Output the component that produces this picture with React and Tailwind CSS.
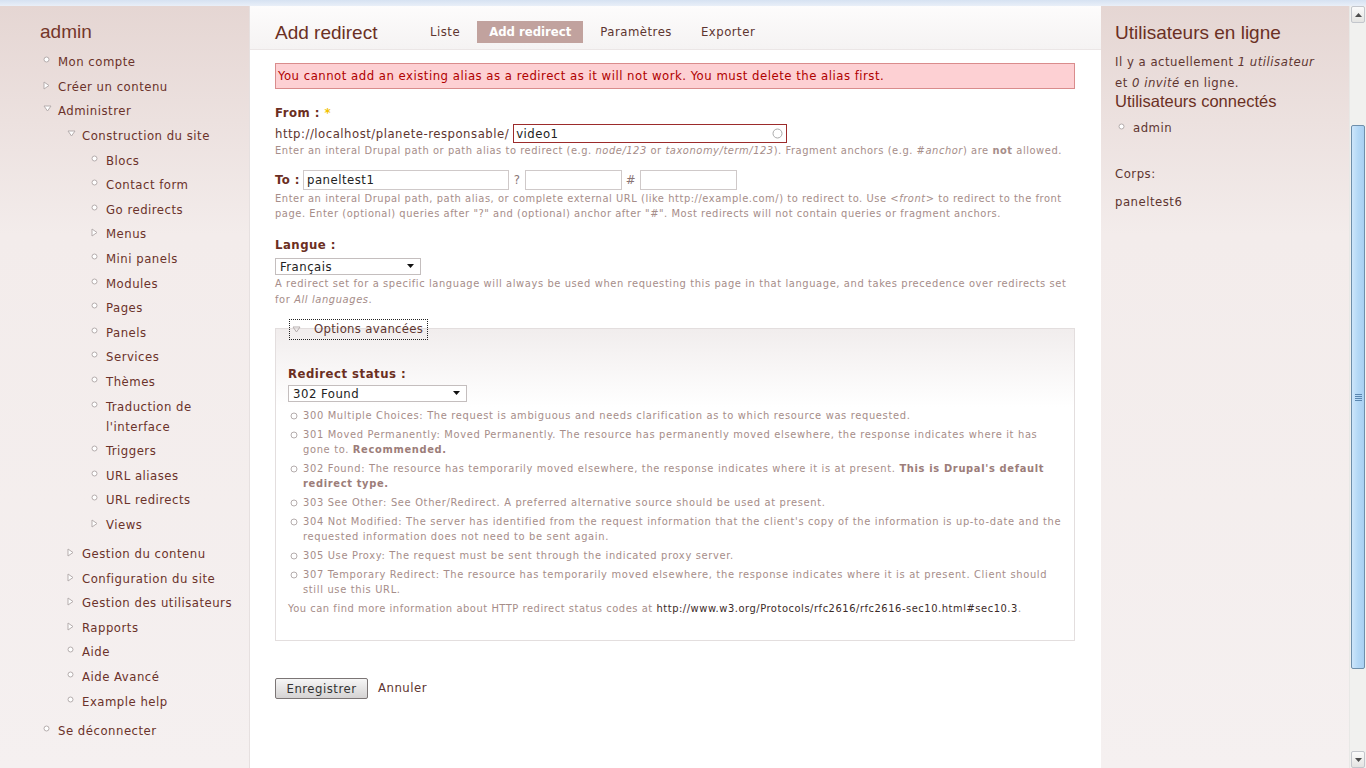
import React from 'react'

const menu = [
  { t: 'Mon compte', b: 'leaf' },
  { t: 'Créer un contenu', b: 'closed' },
  {
    t: 'Administrer',
    b: 'open',
    c: [
      {
        t: 'Construction du site',
        b: 'open',
        c: [
          { t: 'Blocs', b: 'leaf' },
          { t: 'Contact form', b: 'leaf' },
          { t: 'Go redirects', b: 'leaf' },
          { t: 'Menus', b: 'closed' },
          { t: 'Mini panels', b: 'leaf' },
          { t: 'Modules', b: 'leaf' },
          { t: 'Pages', b: 'leaf' },
          { t: 'Panels', b: 'leaf' },
          { t: 'Services', b: 'leaf' },
          { t: 'Thèmes', b: 'leaf' },
          { t: "Traduction de l'interface", b: 'leaf' },
          { t: 'Triggers', b: 'leaf' },
          { t: 'URL aliases', b: 'leaf' },
          { t: 'URL redirects', b: 'leaf' },
          { t: 'Views', b: 'closed' },
        ],
      },
      { t: 'Gestion du contenu', b: 'closed' },
      { t: 'Configuration du site', b: 'closed' },
      { t: 'Gestion des utilisateurs', b: 'closed' },
      { t: 'Rapports', b: 'closed' },
      { t: 'Aide', b: 'leaf' },
      { t: 'Aide Avancé', b: 'leaf' },
      { t: 'Example help', b: 'leaf' },
    ],
  },
  { t: 'Se déconnecter', b: 'leaf' },
]

const statuses = [
  ['300 Multiple Choices: The request is ambiguous and needs clarification as to which resource was requested.'],
  ['301 Moved Permanently: Moved Permanently. The resource has permanently moved elsewhere, the response indicates where it has gone to. ', 'Recommended.'],
  ["302 Found: The resource has temporarily moved elsewhere, the response indicates where it is at present. ", "This is Drupal's default redirect type."],
  ['303 See Other: See Other/Redirect. A preferred alternative source should be used at present.'],
  ["304 Not Modified: The server has identified from the request information that the client's copy of the information is up-to-date and the requested information does not need to be sent again."],
  ['305 Use Proxy: The request must be sent through the indicated proxy server.'],
  ['307 Temporary Redirect: The resource has temporarily moved elsewhere, the response indicates where it is at present. Client should still use this URL.'],
]

function Bullet({ type }) {
  if (type === 'closed')
    return (
      <svg width="7" height="9" viewBox="0 0 7 9">
        <path d="M1 1 L6 4.5 L1 8 Z" fill="#fff" stroke="#b5adad" />
      </svg>
    )
  if (type === 'open')
    return (
      <svg width="9" height="7" viewBox="0 0 9 7">
        <path d="M1 1 L8 1 L4.5 6 Z" fill="#fff" stroke="#b5adad" />
      </svg>
    )
  return (
    <svg width="7" height="7" viewBox="0 0 7 7">
      <circle cx="3.5" cy="3.5" r="2.5" fill="#fff" stroke="#b5adad" />
    </svg>
  )
}

function MenuList({ items }) {
  return (
    <div>
      {items.map((item) => (
        <div key={item.t}>
          <div className="flex items-start py-[2.3px]">
            <span className="w-[18px] shrink-0 pl-[3px] pt-[4px] flex">
              <Bullet type={item.b} />
            </span>
            <span className="leading-[20px] text-[#6b322a]">{item.t}</span>
          </div>
          {item.c && (
            <div className="pl-[24px] mb-[4.5px]">
              <MenuList items={item.c} />
            </div>
          )}
        </div>
      ))}
    </div>
  )
}

function SelectBox({ value, width }) {
  return (
    <div className={`${width} h-[17px] bg-white border border-[#c4bebe] flex items-center justify-between pl-[4px] pr-[6px] text-[13px] text-[#222]`}>
      <span className="leading-none">{value}</span>
      <svg width="7" height="4" viewBox="0 0 7 4">
        <path d="M0 0 L7 0 L3.5 4 Z" fill="#111" />
      </svg>
    </div>
  )
}

export default function App() {
  return (
    <div className="w-[1366px] h-[768px] overflow-hidden flex flex-col bg-white tracking-[0.5px] font-['DejaVu_Sans_Condensed','DejaVu_Sans',sans-serif]">
      <div className="h-[6px] bg-gradient-to-b from-[#d6e2f2] to-[#e9eff8] shrink-0"></div>
      <div className="flex flex-1 min-h-0">
        {/* Left sidebar */}
        <aside className="w-[250px] shrink-0 bg-gradient-to-b from-[#e5d6d3] via-[#f3eceb] via-30% to-[#f5f0f0] border-r border-[#e6e0e0] text-[13px]">
          <h2 className="pl-[40px] pt-[14px] font-['Liberation_Sans',sans-serif] tracking-normal text-[19px] leading-[24px] text-[#74362a]">admin</h2>
          <div className="pl-[40px] pr-[12px] pt-[6px]">
            <MenuList items={menu} />
          </div>
        </aside>

        {/* Main */}
        <main className="w-[851px] shrink-0 flex flex-col">
          <div className="h-[44px] shrink-0 bg-gradient-to-b from-[#fdfcfc] to-[#f5f3f3] border-b border-[#ebe6e6] flex items-center pt-[8px] pl-[25px]">
            <h1 className="mt-[3px] font-['Liberation_Sans',sans-serif] tracking-normal text-[19px] text-[#6b3024] w-[148px]">Add redirect</h1>
            <nav className="flex items-center text-[13px] text-[#5e3530]">
              <span className="pl-[7px]">Liste</span>
              <span className="h-[22px] flex items-center px-[12px] bg-[#c1a29e] text-white font-bold tracking-[0px] ml-[17px]">Add redirect</span>
              <span className="ml-[17px]">Paramètres</span>
              <span className="ml-[29px]">Exporter</span>
            </nav>
          </div>

          <div className="pl-[25px] pr-[26px] text-[13px] text-[#5e3530]">
            <div className="mt-[13px] h-[26px] border border-[#d98c8c] bg-[#fdd0d3] flex items-center pl-[2px] text-[#b00000]">
              You cannot add an existing alias as a redirect as it will not work. You must delete the alias first.
            </div>

            {/* From */}
            <div className="mt-[16px] font-bold text-[#6b2e22] leading-[16px]">
              From : <span className="text-[#f2c200]">*</span>
            </div>
            <div className="mt-[3px] flex items-center">
              <span>http://localhost/planete-responsable/</span>
              <div className="ml-[4px] w-[274px] h-[19px] border border-[#9c2b2b] bg-white flex items-center justify-between pl-[2px] pr-[3px] text-[#222]">
                <span>video1</span>
                <svg width="11" height="11" viewBox="0 0 11 11">
                  <circle cx="5.5" cy="5.5" r="4.5" fill="#fff" stroke="#aaa" />
                </svg>
              </div>
            </div>
            <p className="-mt-[1px] text-[11px] leading-[15px] tracking-[0.55px] text-[#a68d89]">
              Enter an interal Drupal path or path alias to redirect (e.g. <em>node/123</em> or <em>taxonomy/term/123</em>). Fragment anchors (e.g. <em>#anchor</em>) are <strong>not</strong> allowed.
            </p>

            {/* To */}
            <div className="mt-[12px] flex items-center">
              <span className="font-bold text-[#6b2e22] w-[28px]">To :</span>
              <div className="w-[206px] h-[20px] border border-[#cfc9c9] bg-white pl-[3px] text-[#222] flex items-center">paneltest1</div>
              <span className="w-[16px] text-center text-[#8a7575]">?</span>
              <div className="w-[97px] h-[20px] border border-[#cfc9c9] bg-white"></div>
              <span className="w-[18px] text-center text-[#8a7575]">#</span>
              <div className="w-[97px] h-[20px] border border-[#cfc9c9] bg-white"></div>
            </div>
            <p className="mt-[1px] text-[11px] leading-[15px] tracking-[0.55px] text-[#a68d89]">
              Enter an interal Drupal path, path alias, or complete external URL (like http://example.com/) to redirect to. Use <em>&lt;front&gt;</em> to redirect to the front page. Enter (optional) queries after "?" and (optional) anchor after "#". Most redirects will not contain queries or fragment anchors.
            </p>

            {/* Langue */}
            <div className="mt-[16px] font-bold text-[#6b2e22] leading-[16px]">Langue :</div>
            <div className="mt-[5px]">
              <SelectBox value="Français" width="w-[146px]" />
            </div>
            <p className="mt-[1px] text-[11px] leading-[16px] tracking-[0.6px] text-[#a68d89]">
              A redirect set for a specific language will always be used when requesting this page in that language, and takes precedence over redirects set for <em>All languages</em>.
            </p>

            {/* Fieldset */}
            <div className="mt-[20px] h-[313px] border border-[#e3dede] bg-gradient-to-b from-[#f1eded] to-white to-[25%] px-[12px]">
              <div className="-mt-[10px] ml-[1px] w-[139px] h-[21px] border border-dotted border-[#222] flex items-center">
                <span className="w-[24px] pl-[2px] flex">
                  <svg width="9" height="7" viewBox="0 0 9 7">
                    <path d="M1 1 L8 1 L4.5 6 Z" fill="none" stroke="#b5adad" />
                  </svg>
                </span>
                <span className="text-[#5e3530] tracking-[0.3px]">Options avancées</span>
              </div>
              <div className="mt-[26px] font-bold text-[#6b2e22] leading-[16px]">Redirect status :</div>
              <div className="mt-[3px]">
                <SelectBox value="302 Found" width="w-[179px]" />
              </div>
              <div className="mt-[6px] flex flex-col gap-[4px] text-[11px] leading-[15px] tracking-[0.66px] text-[#a68d89]">
                {statuses.map((s) => (
                  <div key={s[0]} className="flex items-start">
                    <span className="w-[15px] shrink-0 pt-[4px] pl-[2px] flex">
                      <svg width="8" height="8" viewBox="0 0 8 8">
                        <circle cx="4" cy="4" r="3" fill="#fff" stroke="#b5adad" />
                      </svg>
                    </span>
                    <span>
                      {s[0]}
                      {s[1] && <strong className="text-[#9c7d79]">{s[1]}</strong>}
                    </span>
                  </div>
                ))}
                <div className="tracking-[0.55px]">
                  You can find more information about HTTP redirect status codes at <span className="text-[#3b2a28]">http://www.w3.org/Protocols/rfc2616/rfc2616-sec10.html#sec10.3</span>.
                </div>
              </div>
            </div>

            {/* Buttons */}
            <div className="mt-[37px] flex items-center">
              <button className="w-[93px] h-[21px] border border-[#7b7575] rounded-[2px] bg-gradient-to-b from-[#f6f6f6] to-[#d5d3d3] text-[13px] text-[#333] leading-none">
                Enregistrer
              </button>
              <span className="ml-[10px]">Annuler</span>
            </div>
          </div>
        </main>

        {/* Right sidebar */}
        <aside className="w-[248px] shrink-0 bg-gradient-to-b from-[#e5d6d3] via-[#f3eceb] via-30% to-[#f5f0f0] pl-[14px] pr-[22px] text-[13px] text-[#5e3530]">
          <h2 className="pt-[15px] font-['Liberation_Sans',sans-serif] tracking-normal text-[19px] leading-[24px] text-[#6b3024]">Utilisateurs en ligne</h2>
          <p className="mt-[6px] leading-[21px]">
            Il y a actuellement <em>1 utilisateur</em> et <em>0 invité</em> en ligne.
          </p>
          <h3 className="-mt-[2px] font-['Liberation_Sans',sans-serif] tracking-normal text-[16.5px] leading-[20px] text-[#6b3024]">Utilisateurs connectés</h3>
          <div className="mt-[7px] flex items-start">
            <span className="w-[18px] pl-[3px] pt-[5px] flex">
              <Bullet type="leaf" />
            </span>
            <span className="leading-[20px]">admin</span>
          </div>
          <p className="mt-[26px] leading-[20px]">Corps:</p>
          <p className="mt-[8px] leading-[20px]">paneltest6</p>
        </aside>

        {/* Scrollbar */}
        <div className="w-[17px] shrink-0 bg-[#f1f1ef] border-l border-[#e8e8e6] flex flex-col">
          <div className="h-[17px] mx-[1px] border border-[#c3c6cc] rounded-[2px] bg-gradient-to-b from-[#fbfbfb] to-[#e4e4e2] flex items-center justify-center">
            <svg width="7" height="4" viewBox="0 0 7 4"><path d="M0 4 L3.5 0 L7 4 Z" fill="#4d4d4d" /></svg>
          </div>
          <div className="h-[102px]"></div>
          <div className="h-[544px] mx-[1px] border border-[#6f8fab] rounded-[2px] bg-gradient-to-r from-[#cde6fb] via-[#b4d8f6] to-[#a9d0f2] flex items-center justify-center">
            <div className="flex flex-col gap-[1px]">
              <div className="w-[7px] h-[1px] bg-[#5a86b0]"></div>
              <div className="w-[7px] h-[1px] bg-[#5a86b0]"></div>
              <div className="w-[7px] h-[1px] bg-[#5a86b0]"></div>
              <div className="w-[7px] h-[1px] bg-[#5a86b0]"></div>
            </div>
          </div>
          <div className="flex-1"></div>
          <div className="h-[17px] mx-[1px] border border-[#c3c6cc] rounded-[2px] bg-gradient-to-b from-[#fbfbfb] to-[#e4e4e2] flex items-center justify-center">
            <svg width="7" height="4" viewBox="0 0 7 4"><path d="M0 0 L3.5 4 L7 0 Z" fill="#4d4d4d" /></svg>
          </div>
        </div>
      </div>
    </div>
  )
}
